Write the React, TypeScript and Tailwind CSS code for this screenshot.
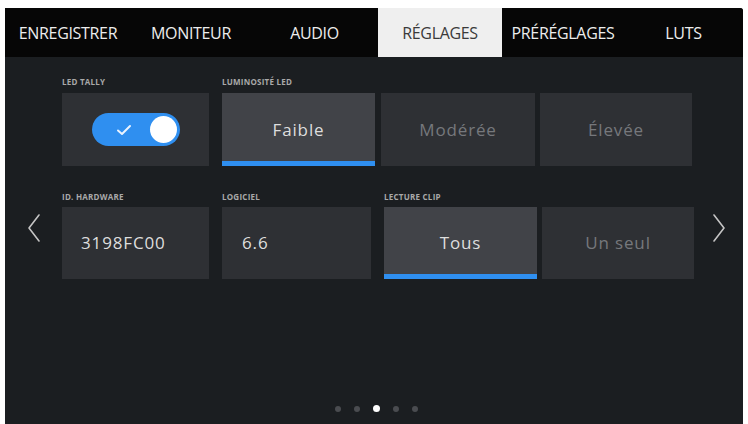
const tabs = [
  { label: "ENREGISTRER", w: "w-[126px]" },
  { label: "MONITEUR", w: "w-[120px]" },
  { label: "AUDIO", w: "w-[127px]" },
  { label: "RÉGLAGES", w: "w-[124px]", active: true },
  { label: "PRÉRÉGLAGES", w: "w-[122px]" },
  { label: "LUTS", w: "w-[119px]" },
];

function Label({ children }: { children: React.ReactNode }) {
  return (
    <div className="h-[10px] text-[8px] font-bold uppercase leading-[10px] tracking-[0.03em] text-[#a9a9a9]">
      {children}
    </div>
  );
}

function Cell({
  w,
  children,
  selected,
  dim,
  left,
  className = "",
}: {
  w: string;
  children?: React.ReactNode;
  selected?: boolean;
  dim?: boolean;
  left?: boolean;
  className?: string;
}) {
  return (
    <div
      className={`relative flex h-full ${w} items-center ${left ? "justify-start pl-[19px]" : "justify-center"} ${
        selected ? "bg-[#414348]" : "bg-[#2e3034]"
      } ${className}`}
    >
      <span className={`text-[17px] tracking-[0.05em] ${dim ? "text-[#76787c]" : "text-[#dedede]"}`}>{children}</span>
      {selected && <div className="absolute bottom-0 left-0 right-0 h-[5px] bg-[#2f8ff0]" />}
    </div>
  );
}

function Chevron({ right }: { right?: boolean }) {
  return (
    <svg width="14" height="30" viewBox="0 0 14 30" fill="none">
      <path
        d={right ? "M2 2 L12 15 L2 28" : "M12 2 L2 15 L12 28"}
        stroke="#c4c4c4"
        strokeWidth="1.6"
        strokeLinecap="round"
        strokeLinejoin="round"
      />
    </svg>
  );
}

export default function App() {
  return (
    <div
      className="h-[424px] w-[748px] overflow-hidden bg-white pl-[5px] pt-[8px]"
      style={{ fontFamily: '"Open Sans", "Noto Sans", sans-serif' }}
    >
      <div className="flex h-[416px] w-[738px] flex-col overflow-hidden rounded-tr-[3px] bg-[#1b1e21]">
        {/* tab bar */}
        <div className="flex h-[49px] bg-[#060606]">
          {tabs.map((t) => (
            <div
              key={t.label}
              className={`flex ${t.w} items-center justify-center text-[16px] font-medium tracking-[-0.02em] ${
                t.active ? "bg-[#efefef] text-[#3a3a3a]" : "text-[#ededed]"
              }`}
            >
              {t.label}
            </div>
          ))}
        </div>

        {/* content */}
        <div className="flex flex-1 flex-col">
          <div className="flex pt-[20px]">
            <div className="w-[57px]" />
            <div className="flex flex-col">
              {/* row 1 */}
              <div className="flex">
                <div className="flex w-[147px] flex-col">
                  <Label>LED Tally</Label>
                  <div className="mt-[6px] flex h-[73px] items-center justify-center bg-[#2e3034]">
                    <div className="relative flex h-[33px] w-[88px] items-center rounded-full bg-[#2f8ff0]">
                      <svg className="ml-[24px]" width="16" height="12" viewBox="0 0 16 12" fill="none">
                        <path d="M2 6.5 L6 10 L14 2" stroke="#eaf3ff" strokeWidth="2" strokeLinecap="round" strokeLinejoin="round" />
                      </svg>
                      <div className="absolute right-[3px] top-[3px] h-[27px] w-[27px] rounded-full bg-white" />
                    </div>
                  </div>
                </div>
                <div className="ml-[13px] flex flex-col">
                  <Label>Luminosité LED</Label>
                  <div className="mt-[6px] flex h-[73px] gap-[6px]">
                    <Cell w="w-[153px]" selected>
                      Faible
                    </Cell>
                    <Cell w="w-[154px]" dim>
                      Modérée
                    </Cell>
                    <Cell w="w-[152px]" dim className="-ml-[1px]">
                      Élevée
                    </Cell>
                  </div>
                </div>
              </div>

              {/* row 2 */}
              <div className="mt-[26px] flex">
                <div className="flex w-[147px] flex-col">
                  <Label>ID. Hardware</Label>
                  <div className="mt-[5px] flex h-[72px]">
                    <Cell w="w-[147px]" left>
                      3198FC00
                    </Cell>
                  </div>
                </div>
                <div className="ml-[13px] flex w-[149px] flex-col">
                  <Label>Logiciel</Label>
                  <div className="mt-[5px] flex h-[72px]">
                    <Cell w="w-[149px]" left className="pl-[20px]">
                      6.6
                    </Cell>
                  </div>
                </div>
                <div className="ml-[13px] flex flex-col">
                  <Label>Lecture clip</Label>
                  <div className="mt-[5px] flex h-[72px] gap-[5px]">
                    <Cell w="w-[153px]" selected>
                      Tous
                    </Cell>
                    <Cell w="w-[152px]" dim>
                      Un seul
                    </Cell>
                  </div>
                </div>
              </div>
            </div>
          </div>

          {/* arrows and page dots */}
          <div className="relative flex-1">
            <div className="absolute left-[22px] top-[-66px]">
              <Chevron />
            </div>
            <div className="absolute left-[707px] top-[-66px]">
              <Chevron right />
            </div>
            <div className="absolute bottom-[12px] left-0 right-0 flex items-center justify-center gap-[13px] pl-[4px]">
              <div className="h-[6px] w-[6px] rounded-full bg-[#4a4c50]" />
              <div className="h-[6px] w-[6px] rounded-full bg-[#4a4c50]" />
              <div className="h-[7px] w-[7px] rounded-full bg-white" />
              <div className="h-[6px] w-[6px] rounded-full bg-[#4a4c50]" />
              <div className="h-[6px] w-[6px] rounded-full bg-[#4a4c50]" />
            </div>
          </div>
        </div>
      </div>
    </div>
  );
}
